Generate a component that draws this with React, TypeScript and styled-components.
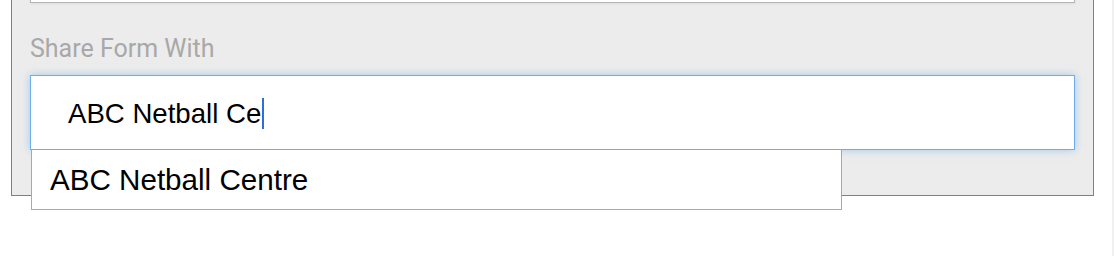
import React from "react";
import styled, { createGlobalStyle } from "styled-components";

const Global = createGlobalStyle`
  html, body { margin: 0; padding: 0; background: #ffffff; }
  body { font-family: "Liberation Sans", Arial, sans-serif; overflow: hidden; }
`;

const Page = styled.div`
  display: flex;
  width: 1114px;
  height: 256px;
  overflow: hidden;
`;

const Main = styled.div`
  flex: 1;
  padding-left: 11px;
`;

const Track = styled.div`
  width: 2px;
  height: 256px;
  background: #f0f0f0;
`;

const Panel = styled.div`
  width: 1083px;
  box-sizing: border-box;
  margin-top: -40px;
  background: #ececec;
  border: 1px solid #d2691e;
  border-top: none;
  padding: 0 18px 45px;
`;

const TopField = styled.div`
  height: 43px;
  box-sizing: border-box;
  background: #ffffff;
  border: 1px solid #b5b5b5;
  box-shadow: 0 1px 2px rgba(0, 0, 0, 0.06);
`;

const Label = styled.div`
  font-family: Roboto, "Noto Sans", sans-serif;
  font-size: 25px;
  line-height: 28px;
  color: #a8a8a8;
  margin-top: 32px;
  margin-bottom: 12px;
`;

const FieldWrap = styled.div`
  position: relative;
`;

const Input = styled.div`
  height: 75px;
  box-sizing: border-box;
  background: #ffffff;
  border: 1px solid #6aaeea;
  box-shadow: 0 0 8px rgba(102, 175, 233, 0.55);
  display: flex;
  align-items: center;
  padding: 2px 0 0 37px;
  font-size: 27.6px;
  color: #000000;
`;

const Caret = styled.span`
  display: inline-block;
  width: 1.5px;
  height: 31px;
  background: #2a6fdb;
  margin-left: 1px;
`;

const Menu = styled.div`
  position: absolute;
  left: 1px;
  top: 100%;
  width: 811px;
  height: 60px;
  box-sizing: border-box;
  background: #ffffff;
  border: 1px solid #a9a9a9;
  border-top: none;
  display: flex;
  align-items: center;
  padding-left: 18px;
  z-index: 2;
`;

const Option = styled.div`
  font-size: 29.6px;
  color: #000000;
`;

export default function App() {
  return (
    <>
      <Global />
      <Page>
        <Main>
          <Panel>
            <TopField />
            <Label>Share Form With</Label>
            <FieldWrap>
              <Input>
                ABC Netball Ce
                <Caret />
              </Input>
              <Menu>
                <Option>ABC Netball Centre</Option>
              </Menu>
            </FieldWrap>
          </Panel>
        </Main>
        <Track />
      </Page>
    </>
  );
}
